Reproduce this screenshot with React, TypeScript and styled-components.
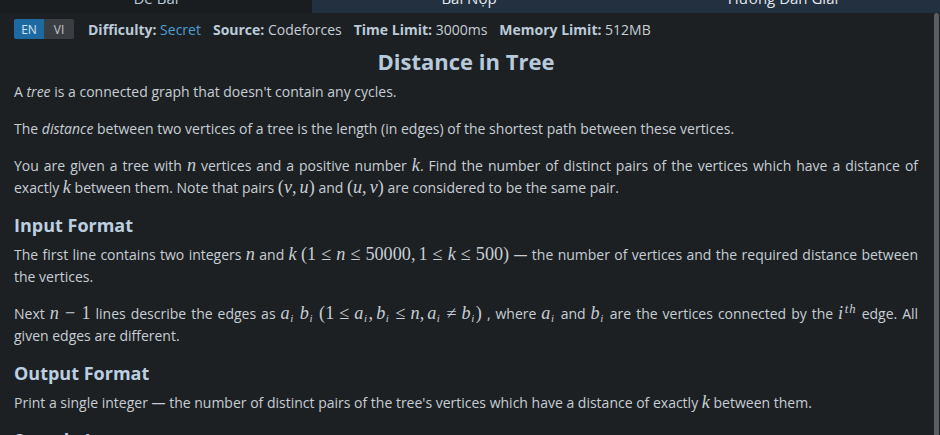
import React from "react";
import styled, { createGlobalStyle } from "styled-components";

const GlobalStyle = createGlobalStyle`
  html, body { margin: 0; padding: 0; background: #1d2022; }
  body { font-family: "Open Sans", "Noto Sans", sans-serif; color: #c6ced6; }
  * { box-sizing: border-box; }
`;

const Page = styled.div`
  position: relative;
  width: 940px;
  height: 435px;
  overflow: hidden;
  background: #1d2022;
`;

const TabBar = styled.div`
  display: grid;
  grid-template-columns: 312px 1fr 1fr;
  height: 30px;
  margin-top: -17px;
`;

const Tab = styled.div<{ $active?: boolean }>`
  display: flex;
  align-items: center;
  justify-content: center;
  font-size: 15px;
  background: ${(p) => (p.$active ? "#1a1d1f" : "#22303f")};
  color: ${(p) => (p.$active ? "#b9c9d9" : "#e3e8ee")};
`;

const Content = styled.div`
  padding: 0 22px 0 14px;
`;

const MetaRow = styled.div`
  display: flex;
  align-items: center;
  gap: 12px;
  margin-top: 6px;
  height: 20px;
  font-size: 14px;
`;

const LangToggle = styled.div`
  display: flex;
  border-radius: 2px;
  overflow: hidden;
  margin-right: 2px;
`;

const LangButton = styled.span<{ $active?: boolean }>`
  display: flex;
  align-items: center;
  justify-content: center;
  width: 30px;
  height: 20px;
  font-size: 12px;
  background: ${(p) => (p.$active ? "#1d6aa3" : "#3a3e42")};
  color: ${(p) => (p.$active ? "#d6e4f0" : "#c2c8ce")};
`;

const MetaItem = styled.span`
  color: #c6ced6;
  white-space: nowrap;
`;

const MetaLabel = styled.b`
  font-weight: 700;
  color: #bccbd9;
`;

const MetaLink = styled.span`
  color: #4c9ed6;
`;

const Title = styled.h1`
  margin: 8px 0 6px;
  text-align: center;
  font-size: 22px;
  line-height: 28px;
  font-weight: 700;
  color: #b7cadc;
`;

const Para = styled.p`
  margin: 0 0 15px;
  font-size: 14px;
  line-height: 22px;
  text-align: justify;
  color: #c6ced6;
`;

const Heading = styled.h3`
  margin: 14px 0 8px;
  font-size: 18px;
  line-height: 22px;
  font-weight: 700;
  color: #bccfe0;
`;

const Math = styled.span`
  font-family: "Liberation Serif", "DejaVu Serif", serif;
  font-size: 1.3em;
  line-height: 1;
  white-space: nowrap;
`;

const V = styled.i`
  font-style: italic;
`;

const Rel = styled.span`
  margin: 0 0.278em;
`;

const Bin = styled.span`
  margin: 0 0.34em;
`;

const Comma = styled.span`
  margin-right: 0.167em;
`;

const Sub = styled.sub`
  font-size: 0.6em;
  font-style: italic;
  vertical-align: -0.25em;
  line-height: 0;
  margin: 0 0.15em 0 0.05em;
`;

const Sup = styled.sup`
  font-size: 0.7em;
  font-style: italic;
  vertical-align: 0.5em;
  line-height: 0;
  margin-left: 0.12em;
  letter-spacing: 0.08em;
`;

const ScrollThumb = styled.div`
  position: absolute;
  right: 1px;
  top: 13px;
  bottom: 0;
  width: 5px;
  border-radius: 3px 3px 0 0;
  background: #5b5f63;
`;

const Ai = () => (
  <>
    <V>a</V>
    <Sub>i</Sub>
  </>
);
const Bi = () => (
  <>
    <V>b</V>
    <Sub>i</Sub>
  </>
);

export default function App() {
  return (
    <>
      <GlobalStyle />
      <Page>
        <TabBar>
          <Tab $active>Đề Bài</Tab>
          <Tab>Bài Nộp</Tab>
          <Tab>Hướng Dẫn Giải</Tab>
        </TabBar>
        <Content>
          <MetaRow>
            <LangToggle>
              <LangButton $active>EN</LangButton>
              <LangButton>VI</LangButton>
            </LangToggle>
            <MetaItem>
              <MetaLabel>Difficulty:</MetaLabel> <MetaLink>Secret</MetaLink>
            </MetaItem>
            <MetaItem>
              <MetaLabel>Source:</MetaLabel> Codeforces
            </MetaItem>
            <MetaItem>
              <MetaLabel>Time Limit:</MetaLabel> 3000ms
            </MetaItem>
            <MetaItem>
              <MetaLabel>Memory Limit:</MetaLabel> 512MB
            </MetaItem>
          </MetaRow>
          <Title>Distance in Tree</Title>
          <Para>
            A <em>tree</em> is a connected graph that doesn't contain any cycles.
          </Para>
          <Para>
            The <em>distance</em> between two vertices of a tree is the length (in edges) of the
            shortest path between these vertices.
          </Para>
          <Para>
            You are given a tree with{" "}
            <Math>
              <V>n</V>
            </Math>{" "}
            vertices and a positive number{" "}
            <Math>
              <V>k</V>
            </Math>
            . Find the number of distinct pairs of the vertices which have a distance of exactly{" "}
            <Math>
              <V>k</V>
            </Math>{" "}
            between them. Note that pairs{" "}
            <Math>
              (<V>v</V>
              <Comma>,</Comma>
              <V>u</V>)
            </Math>{" "}
            and{" "}
            <Math>
              (<V>u</V>
              <Comma>,</Comma>
              <V>v</V>)
            </Math>{" "}
            are considered to be the same pair.
          </Para>
          <Heading>Input Format</Heading>
          <Para>
            The first line contains two integers{" "}
            <Math>
              <V>n</V>
            </Math>{" "}
            and{" "}
            <Math>
              <V>k</V>
            </Math>{" "}
            <Math>
              (1<Rel>≤</Rel>
              <V>n</V>
              <Rel>≤</Rel>50000<Comma>,</Comma>1<Rel>≤</Rel>
              <V>k</V>
              <Rel>≤</Rel>500)
            </Math>{" "}
            — the number of vertices and the required distance between the vertices.
          </Para>
          <Para>
            Next{" "}
            <Math>
              <V>n</V>
              <Bin>−</Bin>1
            </Math>{" "}
            lines describe the edges as{" "}
            <Math>
              <Ai />
            </Math>{" "}
            <Math>
              <Bi />
            </Math>{" "}
            <Math>
              (1<Rel>≤</Rel>
              <Ai />
              <Comma>,</Comma>
              <Bi />
              <Rel>≤</Rel>
              <V>n</V>
              <Comma>,</Comma>
              <Ai />
              <Rel>≠</Rel>
              <Bi />)
            </Math>{" "}
            , where{" "}
            <Math>
              <Ai />
            </Math>{" "}
            and{" "}
            <Math>
              <Bi />
            </Math>{" "}
            are the vertices connected by the{" "}
            <Math>
              <V>i</V>
              <Sup>th</Sup>
            </Math>{" "}
            edge. All given edges are different.
          </Para>
          <Heading>Output Format</Heading>
          <Para>
            Print a single integer — the number of distinct pairs of the tree's vertices which have a
            distance of exactly{" "}
            <Math>
              <V>k</V>
            </Math>{" "}
            between them.
          </Para>
          <Heading>Sample Input</Heading>
        </Content>
        <ScrollThumb />
      </Page>
    </>
  );
}
